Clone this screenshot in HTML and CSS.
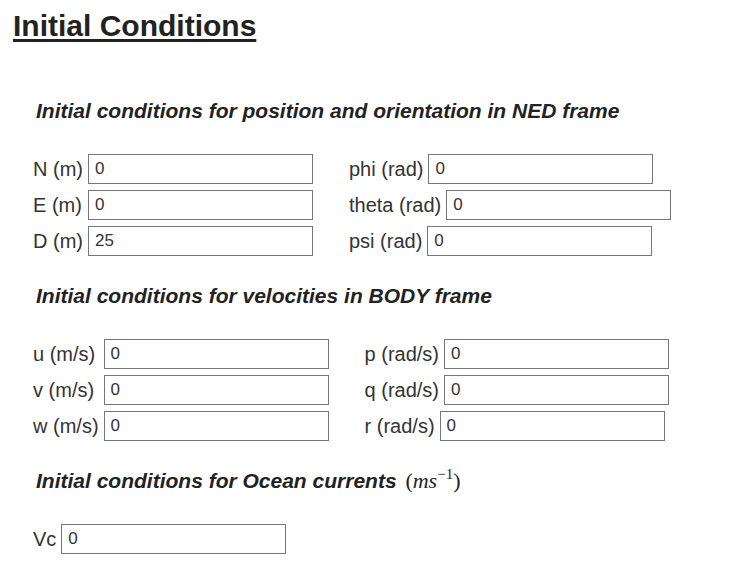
FILE: index.html
```html
<!DOCTYPE html>
<html>
<head>
<meta charset="utf-8">
<link rel="stylesheet" href="styles.css">
</head>
<body>
<h1 class="title">Initial Conditions</h1>
<section class="section">
  <h2 class="heading">Initial conditions for position and orientation in NED frame</h2>
  <div class="cols">
    <div class="grid-col">
      <label class="lbl">N (m)</label><input class="field" type="text" value="0">
      <label class="lbl">E (m)</label><input class="field" type="text" value="0">
      <label class="lbl">D (m)</label><input class="field" type="text" value="25">
    </div>
    <div class="flex-col">
      <div class="row"><label class="lbl">phi (rad)</label><input class="field" type="text" value="0"></div>
      <div class="row"><label class="lbl">theta (rad)</label><input class="field" type="text" value="0"></div>
      <div class="row"><label class="lbl">psi (rad)</label><input class="field" type="text" value="0"></div>
    </div>
  </div>
</section>
<section class="section">
  <h2 class="heading">Initial conditions for velocities in BODY frame</h2>
  <div class="cols">
    <div class="grid-col">
      <label class="lbl">u (m/s)</label><input class="field" type="text" value="0">
      <label class="lbl">v (m/s)</label><input class="field" type="text" value="0">
      <label class="lbl">w (m/s)</label><input class="field" type="text" value="0">
    </div>
    <div class="flex-col">
      <div class="row"><label class="lbl">p (rad/s)</label><input class="field" type="text" value="0"></div>
      <div class="row"><label class="lbl">q (rad/s)</label><input class="field" type="text" value="0"></div>
      <div class="row"><label class="lbl">r (rad/s)</label><input class="field" type="text" value="0"></div>
    </div>
  </div>
</section>
<section class="section">
  <h2 class="heading">Initial conditions for Ocean currents <span class="math">(<i>ms</i><sup class="sup">&minus;1</sup>)</span></h2>
  <div class="cols">
    <div class="flex-col">
      <div class="row"><label class="lbl">Vc</label><input class="field vc" type="text" value="0"></div>
    </div>
  </div>
</section>
</body>
</html>
```
FILE: styles.css
```css
html, body {
  margin: 0;
  padding: 0;
  background: #ffffff;
}
body {
  padding-top: 9px;
  font-family: "Liberation Sans", Arial, sans-serif;
  color: #333333;
}
.title {
  margin: 0;
  padding-left: 13px;
  font-size: 30px;
  line-height: 34px;
  font-weight: bold;
  color: #222222;
  text-decoration: underline;
  text-decoration-thickness: 3px;
  text-underline-offset: 3px;
}
.section {
  padding-left: 33px;
}
.heading {
  margin: 28px 0 31px 3px;
  font-size: 21px;
  line-height: 24px;
  font-weight: bold;
  font-style: italic;
  color: #222222;
  white-space: nowrap;
}
.section:first-of-type .heading {
  margin-top: 56px;
}
.math {
  font-family: "Liberation Serif", "Times New Roman", serif;
  font-weight: normal;
  font-style: normal;
  font-size: 22px;
  margin-left: 3px;
}
.math i {
  font-style: italic;
}
.sup {
  font-size: 15px;
  line-height: 0;
  vertical-align: 9px;
}
.cols {
  display: flex;
  gap: 36px;
  align-items: flex-start;
}
.grid-col {
  display: grid;
  grid-template-columns: auto auto;
  column-gap: 5px;
  row-gap: 6px;
  align-items: center;
}
.flex-col {
  display: flex;
  flex-direction: column;
  gap: 6px;
}
.row {
  display: flex;
  align-items: center;
  gap: 5px;
}
.lbl {
  font-size: 20px;
  line-height: 24px;
  color: #333333;
  white-space: nowrap;
}
.field {
  box-sizing: border-box;
  width: 225px;
  height: 30px;
  margin: 0;
  padding: 0 6px;
  border: 1px solid #767676;
  border-radius: 0;
  background: #ffffff;
  font-family: "Liberation Sans", Arial, sans-serif;
  font-size: 17px;
  color: #333333;
  outline: none;
}
```
